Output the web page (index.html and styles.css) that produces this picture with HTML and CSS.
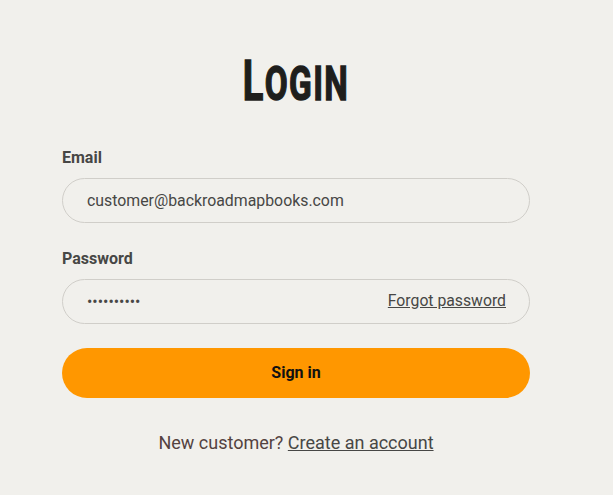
FILE: index.html
```
<!DOCTYPE html>
<html lang="en">
<head>
<meta charset="utf-8">
<title>Login</title>
<link rel="stylesheet" href="styles.css">
</head>
<body>
<main class="page">
  <h1 class="title"><span class="title-cap">L</span>ogin</h1>
  <form class="form">
    <label class="label" for="email">Email</label>
    <div class="field">
      <input class="input" id="email" type="text" value="customer@backroadmapbooks.com">
    </div>
    <label class="label label-password" for="password">Password</label>
    <div class="field">
      <input class="input" id="password" type="password" value="••••••••••">
      <a class="forgot" href="#">Forgot password</a>
    </div>
    <button class="submit" type="button">Sign in</button>
    <p class="signup">New customer? <a href="#">Create an account</a></p>
  </form>
</main>
</body>
</html>
```
FILE: styles.css
```
* { box-sizing: border-box; }
html, body { margin: 0; height: 100%; }
body { background: #f1f0ec; font-family: Roboto, sans-serif; color: #474745; overflow: hidden; }
.page { width: 468px; margin-left: 62px; padding-top: 51px; }
.title { margin: 0 0 37px; height: 60px; text-align: center; font-family: Roboto, sans-serif; font-size: 49px; line-height: 60px; font-weight: 700; text-transform: uppercase; color: #1e1e1c; -webkit-text-stroke: 1.5px #1e1e1c; letter-spacing: 2px; transform: scaleX(.68); }
.title-cap { font-size: 56px; }
.form { display: flex; flex-direction: column; }
.label { font-size: 16px; font-weight: 700; line-height: 19px; margin-bottom: 11px; }
.label-password { margin-top: 26px; }
.field { height: 45px; border: 1px solid #d0cec9; border-radius: 23px; display: flex; align-items: center; padding: 0 23px 0 24px; }
.input { flex: 1; min-width: 0; border: 0; background: transparent; font: 15.85px Roboto, sans-serif; color: #474745; outline: 0; padding: 0; }
.forgot { font-size: 15.75px; color: #474745; padding-bottom: 2px; }
.submit { height: 50px; margin-top: 24px; padding: 0 0 2px; border: 0; border-radius: 25px; background: #ff9700; color: #111; font: 700 16px Roboto, sans-serif; }
.signup { margin: 34px 0 0; text-align: center; font-size: 18px; line-height: 22px; color: #54423f; }
.signup a { color: #474745; }
```
